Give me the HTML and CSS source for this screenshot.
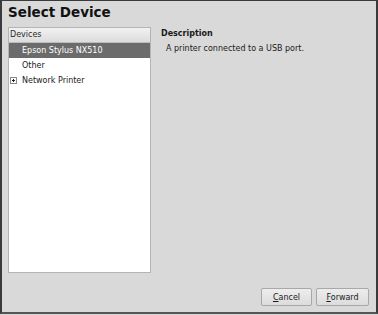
FILE: index.html
```html
<!DOCTYPE html>
<html>
<head>
<meta charset="utf-8">
<link rel="stylesheet" href="styles.css">
</head>
<body>
<div class="window">
  <div class="title">Select Device</div>
  <div class="main">
    <div class="listbox">
      <div class="list-header">Devices</div>
      <div class="row selected">Epson Stylus NX510</div>
      <div class="row">Other</div>
      <div class="row expander"><span class="plus"><svg width="7" height="7" viewBox="0 0 7 7"><rect x="0.5" y="0.5" width="6" height="6" fill="#fff" stroke="#8a8a8a"/><path d="M2 3.5h3M3.5 2v3" stroke="#222" stroke-width="1"/></svg></span>Network Printer</div>
    </div>
    <div class="desc">
      <div class="desc-title">Description</div>
      <div class="desc-text">A printer connected to a USB port.</div>
    </div>
  </div>
  <div class="buttons">
    <button class="btn"><u>C</u>ancel</button>
    <button class="btn"><u>F</u>orward</button>
  </div>
</div>
</body>
</html>
```
FILE: styles.css
```css
html, body {
  margin: 0;
  padding: 0;
  background: #d8d8d8;
}
body {
  width: 378px;
  height: 315px;
  overflow: hidden;
  font-family: "DejaVu Sans", "Liberation Sans", sans-serif;
  color: #1a1a1a;
}
.window {
  box-sizing: border-box;
  width: 378px;
  height: 314px;
  border-top: 1px solid #3a3a3a;
  border-left: 2px solid #3a3a3a;
  border-right: 2px solid #3a3a3a;
  border-bottom: 2px solid #555;
  background: #d9d9d9;
  display: flex;
  flex-direction: column;
  padding: 0 6px 0 6px;
}
.title {
  font-weight: bold;
  font-size: 13.5px;
  line-height: 16px;
  margin-top: 3px;
  height: 21px;
  color: #111;
}
.main {
  display: flex;
  height: 246px;
  margin-top: 2px;
}
.listbox {
  box-sizing: border-box;
  width: 143px;
  height: 246px;
  background: #fff;
  border: 1px solid #b4b4b4;
  font-size: 8px;
}
.list-header {
  height: 14px;
  line-height: 14px;
  padding-left: 1px;
  background: linear-gradient(#f2f2f2, #dcdcdc);
  border-bottom: 1px solid #bdbdbd;
  color: #2a2a2a;
}
.row {
  height: 15px;
  line-height: 15px;
  padding-left: 13px;
  color: #1a1a1a;
}
.row.selected {
  background: #6b6b6b;
  color: #fff;
}
.row.expander {
  padding-left: 1px;
  display: flex;
  align-items: center;
}
.plus {
  display: inline-flex;
  width: 12px;
  align-items: center;
}
.plus svg { display: block; }
.desc {
  margin-left: 10px;
  padding-top: 1px;
}
.desc-title {
  font-weight: bold;
  font-size: 8px;
  line-height: 12px;
}
.desc-text {
  font-size: 8px;
  line-height: 12px;
  margin-top: 3px;
  padding-left: 5px;
}
.buttons {
  display: flex;
  justify-content: flex-end;
  gap: 4px;
  margin-top: 15px;
  padding-right: 1px;
}
.btn {
  box-sizing: border-box;
  height: 18px;
  padding: 0;
  font-family: "DejaVu Sans", "Liberation Sans", sans-serif;
  font-size: 8px;
  color: #1a1a1a;
  background: linear-gradient(#ededed, #dcdcdc);
  border: 1px solid #a8a8a8;
  border-radius: 2px;
}
.btn:first-child { width: 51px; }
.btn:last-child { width: 53px; }
```
